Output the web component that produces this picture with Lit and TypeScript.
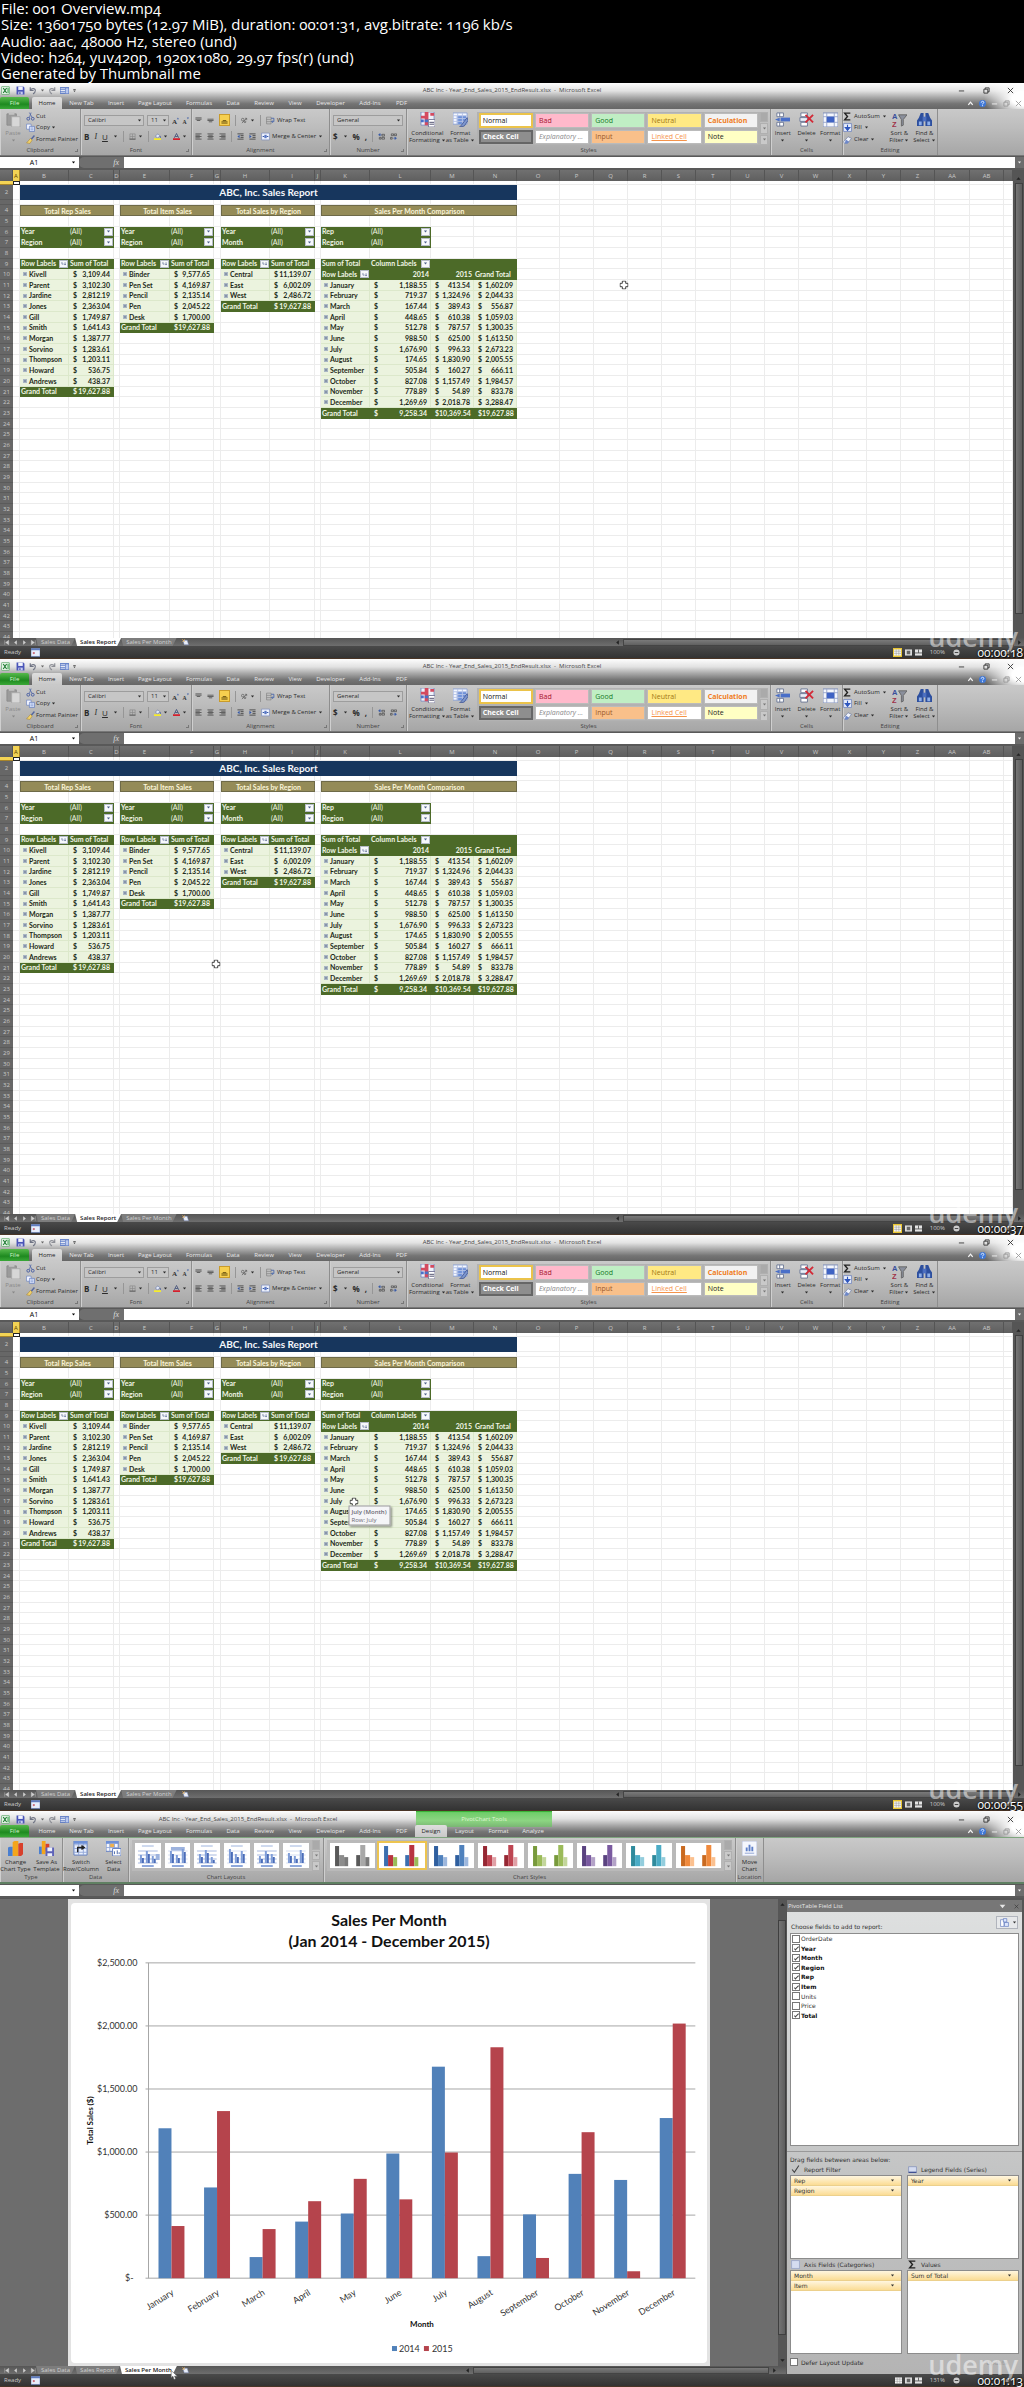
import { LitElement, html, svg, css, nothing, type TemplateResult } from "lit";
import { customElement, property } from "lit/decorators.js";
import { classMap } from "lit/directives/class-map.js";

/* ---------- data ---------- */

const INFO = [
  "File: 001 Overview.mp4",
  "Size: 13601750 bytes (12.97 MiB), duration: 00:01:31, avg.bitrate: 1196 kb/s",
  "Audio: aac, 48000 Hz, stereo (und)",
  "Video: h264, yuv420p, 1920x1080, 29.97 fps(r) (und)",
  "Generated by Thumbnail me",
];

const REPS: [string, string][] = [
  ["Kivell", "3,109.44"], ["Parent", "3,102.30"], ["Jardine", "2,812.19"], ["Jones", "2,363.04"],
  ["Gill", "1,749.87"], ["Smith", "1,641.43"], ["Morgan", "1,387.77"], ["Sorvino", "1,283.61"],
  ["Thompson", "1,203.11"], ["Howard", "536.75"], ["Andrews", "438.37"],
];
const ITEMS: [string, string][] = [
  ["Binder", "9,577.65"], ["Pen Set", "4,169.87"], ["Pencil", "2,135.14"], ["Pen", "2,045.22"], ["Desk", "1,700.00"],
];
const REGIONS: [string, string][] = [["Central", "11,139.07"], ["East", "6,002.09"], ["West", "2,486.72"]];
const MONTHS: [string, string, string, string][] = [
  ["January", "1,188.55", "413.54", "1,602.09"],
  ["February", "719.37", "1,324.96", "2,044.33"],
  ["March", "167.44", "389.43", "556.87"],
  ["April", "448.65", "610.38", "1,059.03"],
  ["May", "512.78", "787.57", "1,300.35"],
  ["June", "988.50", "625.00", "1,613.50"],
  ["July", "1,676.90", "996.33", "2,673.23"],
  ["August", "174.65", "1,830.90", "2,005.55"],
  ["September", "505.84", "160.27", "666.11"],
  ["October", "827.08", "1,157.49", "1,984.57"],
  ["November", "778.89", "54.89", "833.78"],
  ["December", "1,269.69", "2,018.78", "3,288.47"],
];

const COLS = "A B C D E F G H I J K L M N O P Q R S T U V W X Y Z AA AB".split(" ");
const COL_WIDTHS = [7, 49, 45, 6, 50, 44, 7, 49, 45, 6, 49, 61, 43, 43, 43, 34, 34, 34, 34, 35, 34, 34, 34, 34, 34, 34, 35, 34, 9];

/* ---------- icons ---------- */

const ICONS: Record<string, TemplateResult> = {
  excel: svg`<rect x="1" y="1" width="14" height="14" rx="1" fill="#e9f5ea" stroke="#3f9a4c"/><path d="M4 3.500l6 9M10 3.500l-6 9" stroke="#1f7a33" stroke-width="2"/><path d="M11 3h4v10h-4z" fill="#7cc287"/>`,
  save: svg`<path d="M1 1h12l2 2v12H1z" fill="#4a55b8"/><path d="M4 1h8v6H4z" fill="#f2f4fd"/><path d="M4 10h8v5H4z" fill="#c7cdf0"/><path d="M6 11h2v3H6z" fill="#39429a"/>`,
  undo: svg`<path d="M4 2v6h6M4 8c1-4 9-5 9 0 0 3-2 5-4 6" fill="none" stroke="#6f7484" stroke-width="2"/>`,
  redo: svg`<path d="M12 2v6H6M12 8c-1-4-9-5-9 0 0 3 2 5 4 6" fill="none" stroke="#8d8f96" stroke-width="2"/>`,
  table: svg`<path d="M0 2h16v12H0z" fill="#5877c4"/><path d="M1 5h8M1 8h8M1 11h8" stroke="#fff" stroke-width="1.500"/><path d="M10 4h5v9h-5z" fill="#b9c8ee"/>`,
  more: svg`<path d="M4 4h8v2H4zM4 8h8l-4 5z" fill="#444"/>`,
  down: svg`<path d="M3 5h10l-5 6z" fill="currentColor"/>`,
  paste: svg`<path d="M1 2h10v12H1z" fill="#9b9b9b" stroke="#8c8c8c"/><path d="M3 0h6v3H3z" fill="#c2c2c2"/><path d="M6 5h9v11H6z" fill="#d7d7d7" stroke="#aaa"/>`,
  cut: svg`<path d="M9 1L6 10M6 1l5 9" stroke="#566ca8" stroke-width="1.500" fill="none"/><circle cx="4" cy="12" r="2.500" fill="none" stroke="#3f55a0" stroke-width="1.500"/><circle cx="12" cy="12" r="2.500" fill="none" stroke="#3f55a0" stroke-width="1.500"/>`,
  copy: svg`<path d="M1 2h8v9H1z" fill="#f3f6ff" stroke="#5a76bd"/><path d="M6 6h9v9H6z" fill="#dbe5fb" stroke="#4b68b5"/><path d="M8 9h5M8 12h5" stroke="#5a76bd"/>`,
  brush: svg`<path d="M15 1l-6 7" stroke="#5568a0" stroke-width="2.500"/><path d="M8 6l3 3-4 6-6-1z" fill="#f3d36b" stroke="#a98532"/>`,
  grow: svg`<text x="0" y="15" font-family="Liberation Serif,serif" font-weight="bold" font-size="16" fill="#333">A</text><path d="M11 5l2.500-4L16 5z" fill="#4463a8"/>`,
  shrink: svg`<text x="1" y="15" font-family="Liberation Serif,serif" font-weight="bold" font-size="13" fill="#333">A</text><path d="M11 1l2.500 4L16 1z" fill="#4463a8"/>`,
  borders: svg`<path d="M2 2h12v12H2zM8 2v12M2 8h12" fill="none" stroke="#8a8a8a" stroke-width="1.500"/><path d="M1 14h14" stroke="#555" stroke-width="2"/>`,
  fill: svg`<path d="M3 7l6-5 5 5-6 4z" fill="#dfe7f8" stroke="#4b5f9a"/><path d="M14 7l1 4" stroke="#4b5f9a" stroke-width="2"/><path d="M0 12h16v4H0z" fill="#f6ec2c"/>`,
  color: svg`<path d="M3 11L8 1l5 10M5 8h6" fill="none" stroke="#46537c" stroke-width="2"/><path d="M0 12h16v4H0z" fill="#d51f2c"/>`,
  vtop: svg`<path d="M1 2h14M1 5h14M4 8h8" stroke="#555" stroke-width="2"/>`,
  vmid: svg`<path d="M1 5h14M1 8h14M4 11h8" stroke="#555" stroke-width="2"/>`,
  vbot: svg`<path d="M4 8h8M1 11h14M1 14h14" stroke="#6b5310" stroke-width="2"/>`,
  left: svg`<path d="M1 2h14M1 5h10M1 8h14M1 11h10M1 14h14" stroke="#555" stroke-width="2"/>`,
  center: svg`<path d="M1 2h14M3 5h10M1 8h14M3 11h10M1 14h14" stroke="#555" stroke-width="2"/>`,
  right: svg`<path d="M1 2h14M5 5h10M1 8h14M5 11h10M1 14h14" stroke="#555" stroke-width="2"/>`,
  orient: svg`<path d="M2 14L13 3M9 3h4v4" fill="none" stroke="#555" stroke-width="1.500"/><circle cx="4" cy="6" r="3" fill="none" stroke="#555" stroke-width="1.500"/><circle cx="9" cy="11" r="2" fill="none" stroke="#555" stroke-width="1.500"/>`,
  indentL: svg`<path d="M1 2h14M8 6h7M8 10h7M1 14h14" stroke="#444" stroke-width="2"/><path d="M6 4v8L1 8z" fill="#3458a8"/>`,
  indentR: svg`<path d="M1 2h14M8 6h7M8 10h7M1 14h14" stroke="#444" stroke-width="2"/><path d="M1 4v8l5-4z" fill="#3458a8"/>`,
  wrap: svg`<path d="M1 2h8v12H1zM1 6h8M1 10h8" fill="none" stroke="#777"/><path d="M9 4h5v6h-4M12 8l-2 2 2 2" fill="none" stroke="#4463a8" stroke-width="1.500"/>`,
  merge: svg`<path d="M1 2h14v12H1z" fill="#eef2fc" stroke="#6a7fb8"/><path d="M3 8h3M13 8h-3" stroke="#3458a8" stroke-width="2"/><path d="M6 5h4v6H6z" fill="#5877c4"/>`,
  incdec: svg`<path d="M1 4l4-3v6zM5 4h4" stroke="#3458a8" fill="#3458a8"/><path d="M9 3h6v4H9zM3 10h4v4H3zM9 10h6v4H9z" fill="none" stroke="#444" stroke-width="1.500"/>`,
  decdec: svg`<path d="M15 12l-4-3v6zM11 12H7" stroke="#3458a8" fill="#3458a8"/><path d="M3 2h5v4H3zM10 2h5v4h-5zM1 10h4v4H1z" fill="none" stroke="#444" stroke-width="1.500"/>`,
  cond: svg`<path d="M1 0h14v14H1z" fill="#eef1fa" stroke="#8090c0"/><path d="M5 0h4v14H5zM1 4h5v3H1zM11 1h4v3h-4z" fill="#d44a5f"/><path d="M5 8h4v3H5zM1 8h3v3H1z" fill="#4a6fc8"/><path d="M9 8h7v8H9z" fill="#fff" stroke="#7a7a9a"/><path d="M10 11h5M10 13h5" stroke="#4a4a6a"/>`,
  astable: svg`<path d="M0 1h15v12H0z" fill="#f5f8ff" stroke="#8ea2d4"/><path d="M4 4h10v9H4z" fill="#6d90d8"/><path d="M0 4h15M0 7h15M0 10h15M5 1v12M10 1v12" stroke="#b5c3e6"/><path d="M15 6l-6 8-2 2 5-1 4-6z" fill="#7d97cf" stroke="#4b5f9a"/>`,
  insert: svg`<path d="M2 1h7v4H2zM2 11h7v4H2z" fill="#fff" stroke="#6c7896"/><path d="M5 1v4M5 11v4" stroke="#6c7896"/><path d="M6 6h10v4H6z" fill="#4a6fc8"/><path d="M5 6v4L0 8z" fill="#4a6fc8"/>`,
  delete: svg`<path d="M2 1h7v4H2zM2 11h7v4H2z" fill="#fff" stroke="#6c7896"/><path d="M1 6h8v4H1z" fill="#e9edf8" stroke="#6c7896"/><path d="M7 3l8 8M15 3l-8 8" stroke="#d22b38" stroke-width="2"/>`,
  format: svg`<path d="M0 1h16v15H0z" fill="#f4f6fc" stroke="#7d8cb8"/><path d="M0 5h16M0 11h16M4 1v15M12 1v15" stroke="#9aa7cb"/><path d="M4 5h8v6H4z" fill="#3f63c4"/>`,
  sum: svg`<path d="M13 2H3l5 6-5 6h10" fill="none" stroke="#222" stroke-width="2.500"/>`,
  filldown: svg`<path d="M1 1h14v14H1z" fill="#e7edfb" stroke="#4b68b5"/><path d="M8 3v6M4 8l4 5 4-5z" fill="#2d55bd" stroke="#2d55bd" stroke-width="2"/>`,
  eraser: svg`<path d="M1 12l8-9 6 3-7 9H3z" fill="#f0f3fb" stroke="#5f6f9c"/><path d="M5 8l6 4-3 3H3z" fill="#6d87c8"/>`,
  sort: svg`<text x="0" y="7" font-family="Liberation Sans,sans-serif" font-weight="bold" font-size="8" fill="#3a4f9b">A</text><text x="0" y="16" font-family="Liberation Sans,sans-serif" font-weight="bold" font-size="8" fill="#a03048">Z</text><path d="M7 3h9l-4 5v6l-2 1V8z" fill="#8a8f9c" stroke="#666"/>`,
  find: svg`<path d="M2 6l2-5h3v14H0V9zM14 6l-2-5H9v14h7V9z" fill="#2d4f9e"/><path d="M6 5h4v5H6z" fill="#4c6fc0"/><path d="M2 10h3v4H2zM11 10h3v4h-3z" fill="#8fb0ea"/>`,
  chartType: svg`<path d="M0 7l2-1h3v10H0z" fill="#4a7fd0"/><path d="M5 1l2-1h4v16H5z" fill="#f4a51c"/><path d="M11 3l2-1h3v12l-2 2h-3z" fill="#d8402c"/>`,
  chartSave: svg`<path d="M0 6h3v8H0z" fill="#4a7fd0"/><path d="M3 0h4v14H3z" fill="#f4a51c"/><path d="M7 3h4v8H7z" fill="#d8402c"/><path d="M7 7h9v9H7z" fill="#5d62b8"/><path d="M9 7h5v4H9zM9 13h5v3H9z" fill="#edf0fb"/>`,
  switch: svg`<path d="M1 0h14v15H1z" fill="#eaf0fc" stroke="#5f7cc0"/><path d="M1 4h14M1 8h14M1 12h14M6 0v15M11 0v15" stroke="#93a9da"/><path d="M1 0h14v3H1z" fill="#6d90d8"/><path d="M5 12V7h6M9 5l3 2-3 2" fill="none" stroke="#222" stroke-width="1.500"/>`,
  selectData: svg`<path d="M0 0h13v11H0z" fill="#f6f8fe" stroke="#5f7cc0"/><path d="M0 0h13v3H0z" fill="#6d90d8"/><path d="M4 3h5v4H4z" fill="#f0b04a"/><path d="M0 7h13M4 3v8M9 3v8" stroke="#93a9da"/><path d="M7 8h9v8H7z" fill="#fff" stroke="#5f7cc0"/><path d="M9 14v-3M12 14v-4M14 14v-2" stroke="#4463a8"/>`,
  moveChart: svg`<path d="M0 0h16v16H0z" fill="#f5f7fd" stroke="#b4bdd6"/><path d="M4 11V7h2v4zM7 11V4h2v7zM10 11V6h2v5z" fill="#5f80c8"/><path d="M3 13h10" stroke="#8ea2d4"/>`,
  help: svg`<circle cx="8" cy="8" r="8" fill="#3f78d8"/><path d="M5 6c0-4 6-4 6-.500 0 2-3 2-3 4.500M8 12v2" fill="none" stroke="#fff" stroke-width="2"/>`,
  min: svg`<path d="M2 9h12" stroke="currentColor" stroke-width="2"/>`,
  restore: svg`<path d="M2 5h9v9H2zM5 5V2h9v9h-3" fill="none" stroke="currentColor" stroke-width="2"/>`,
  close: svg`<path d="M2 2l12 12M14 2L2 14" stroke="currentColor" stroke-width="2"/>`,
  up: svg`<path d="M3 11l5-6 5 6" fill="none" stroke="currentColor" stroke-width="3"/>`,
  upFill: svg`<path d="M3 11h10L8 5z" fill="currentColor"/>`,
  leftFill: svg`<path d="M11 3v10L5 8z" fill="currentColor"/>`,
  rightFill: svg`<path d="M5 3v10l6-5z" fill="currentColor"/>`,
  first: svg`<path d="M4 3v10M13 3v10L6 8z" fill="currentColor" stroke="currentColor"/>`,
  last: svg`<path d="M12 3v10M3 3v10l7-5z" fill="currentColor" stroke="currentColor"/>`,
  newSheet: svg`<path d="M2 3h10l3 10H5z" fill="#e8edf8" stroke="#6d7fb0"/><path d="M1 1l5 5M6 1L1 6" stroke="#f0b04a" stroke-width="2"/>`,
  record: svg`<path d="M0 1h16v14H0z" fill="#e8eefb" stroke="#5f7cc0"/><path d="M0 1h16v3H0z" fill="#5f7cc0"/><circle cx="5" cy="9" r="2" fill="#c86878"/>`,
  vNormal: svg`<path d="M0 1h16v14H0z" fill="#f4f4f4"/><path d="M0 5h16M0 10h16M5 1v14M11 1v14" stroke="#888"/>`,
  vLayout: svg`<path d="M0 1h16v14H0z" fill="#ddd"/><path d="M4 4h8v8H4z" fill="#666"/>`,
  vBreak: svg`<path d="M0 1h16v14H0z" fill="#e4e4e4"/><path d="M8 1v8M0 9h16" stroke="#555" stroke-width="2"/>`,
  zoomOut: svg`<circle cx="8" cy="8" r="7" fill="#ccc"/><path d="M4 8h8" stroke="#333" stroke-width="2"/>`,
  funnel: svg`<path d="M2 8l4 5L14 1" fill="none" stroke="#444" stroke-width="2"/>`,
  legend: svg`<path d="M1 3h14v10H1z" fill="#d5dcf0" stroke="#6d7fb0"/><path d="M1 13h14" stroke="#33448a" stroke-width="2"/>`,
  axis: svg`<path d="M1 1h14v14H1z" fill="#d5dcf0" stroke="#8595c4"/>`,
  panes: svg`<path d="M1 3h6v12H1z" fill="#fff" stroke="#4b68b5"/><path d="M6 1h6v6H6zM8 8h7v7H8z" fill="#dbe5fb" stroke="#4b68b5"/>`,
  sortBtn: svg`<path d="M3 3v7M3 10h5M13 4v7M10 9l3 4 3-4" fill="none" stroke="#4b5f8a" stroke-width="2"/>`,
  cross: svg`<path d="M5 1h6v4h4v6h-4v4H5v-4H1V5h4z" fill="#fff" stroke="#222" stroke-width="1.500"/>`,
  arrow: svg`<path d="M3 0v13l3-3 2 6 3-1-2-5h5z" fill="#fff" stroke="#555"/>`,
};

const icon = (name: string, size = "s") =>
  html`<svg class="ic ${size}" viewBox="0 0 16 16" aria-hidden="true">${ICONS[name]}</svg>`;

const shared = css`
  *, *::before, *::after { box-sizing: border-box; }
  button, input, select { font: inherit; color: inherit; margin: 0; padding: 0; border: 0; background: none; }
  .ic { display: block; flex: none; }
  .xs { width: 5px; height: 5px; }
  .s { width: 7px; height: 7px; }
  .m { width: 9px; height: 9px; }
  .l { width: 15px; height: 15px; }
`;

/* ---------- title bar and ribbon ---------- */

@customElement("excel-ribbon")
class ExcelRibbon extends LitElement {
  @property() mode = "home";

  static styles = [shared, css`
    :host { display: block; color: #2b2b2b; font: 6px/7px "Open Sans", "Noto Sans", sans-serif; }
    .chrome {
      background:
        radial-gradient(ellipse 40px 24px at 100% 60%, #fff 30%, transparent),
        linear-gradient(#fdfdfd, #e2e2e2 30%, #a9a9a9 55%, #747474 80%, #666);
    }
    .title { display: grid; grid-template-columns: 80px 1fr 80px; height: 14px; align-items: center; }
    .chart .title { grid-template-columns: 80px 336px 136px 1fr 80px; }
    .quick { display: flex; align-items: center; gap: 3px; padding-left: 1px; color: #666; }
    .name { text-align: center; color: #444; white-space: nowrap; }
    .context { align-self: stretch; text-align: center; color: #dff5d4; line-height: 16px; background: linear-gradient(#1fa51f, #6fce6a 10%, #8cd582 60%, #79b673); }
    .win { display: flex; justify-content: space-between; padding: 0 10px 0 14px; color: #333; }
    .tabs { display: grid; grid-template-columns: 29px 3px 30px 39px 30px 48px 40px 28px 34px 28px 43px 36px 27px 32px 35px 33px 36px 1fr auto; height: 12px; align-items: stretch; color: #e9e9e9; }
    .tabs button { white-space: nowrap; text-align: center; padding-top: 1px; }
    .tabs .file { grid-column: 1; color: #d8f5d0; background: linear-gradient(#57b94c, #1e8a20 60%, #3aa838); border-radius: 2px 2px 0 0; }
    .tabs .first { grid-column: 3; }
    .tabs .on { color: #222; background: linear-gradient(#dedede, #c8c8c8); border-radius: 2px 2px 0 0; }
    .doc { grid-column: -2; display: flex; align-items: center; gap: 5px; padding-right: 2px; color: #f5f5f5; }
    .doc .dim { color: #999; }
    .ribbon { display: flex; height: 47px; background: linear-gradient(#c9c9c9, #bdbdbd 40%, #a6a6a6); border-bottom: 1px solid #777; }
    .chart .ribbon { border-top: 1px solid #7fa57f; border-bottom: 2px solid #5f8062; }
    .group { position: relative; display: flex; flex-direction: column; border-right: 1px solid #8e8e8e; box-shadow: inset 1px 0 #cfcfcf; white-space: nowrap; }
    .body { flex: 1; display: flex; min-height: 0; }
    .label { text-align: center; height: 9px; line-height: 8px; color: #444; }
    .corner::after { content: ""; position: absolute; right: 2px; bottom: 3px; width: 3px; height: 3px; border: solid #777; border-width: 0 1px 1px 0; }
    .g-clip { width: 81px; } .g-font { width: 111px; } .g-align { width: 138px; } .g-num { width: 77px; }
    .g-styles { width: 364px; } .g-cells { width: 72px; } .g-edit { width: 95px; }
    .g-type { width: 63px; } .g-data { width: 66px; } .g-layouts { width: 195px; } .g-cstyles { width: 412px; } .g-loc { width: 28px; }
    .big { display: flex; flex-direction: column; align-items: center; padding-top: 3px; flex: 1; gap: 0; text-align: center; }
    .big .lines { padding-top: 3px; }
    .big .lines span { display: flex; justify-content: center; align-items: center; height: 7px; gap: 1px; }
    .off { color: #888; }
    .stack { display: flex; flex-direction: column; justify-content: space-around; padding: 2px 0 1px; }
    .stack button, .text { display: flex; align-items: center; gap: 2px; }
    .clip { flex: 0 0 26px; }
    .g-clip .stack button { gap: 1px; }
    .rows { display: flex; flex-direction: column; gap: 4px; padding: 5px 4px 0 3px; flex: 1; }
    .line { display: flex; align-items: center; height: 12px; gap: 5px; }
    .line.tight { gap: 3px; }
    .sep { width: 1px; height: 11px; background: #969696; }
    .pick { appearance: none; height: 11px; border: 1px solid #9d9d9d; padding-left: 3px; background: #c6c6c6; border-radius: 0; }
    .combo { display: grid; align-items: center; }
    .combo > * { grid-area: 1 / 1; }
    .combo .ic { justify-self: end; pointer-events: none; margin-right: 2px; }
    .w60 { width: 60px; } .w22 { width: 22px; } .w70 { width: 70px; }
    .lit { display: grid; place-items: center; width: 11px; height: 12px; background: #f6cf4f; border: 1px solid #c99b2a; }
    .i { font-style: italic; font-family: "Liberation Serif", serif; } .u { text-decoration: underline; }
    .b { font-weight: 700; }
    .line .b, .line .i, .line .u { font-size: 8px; }
    .twin { display: flex; flex: 0 0 66px; padding-left: 2px; }
    .gallery { display: flex; margin: 3px 2px 1px 2px; }
    .styles { display: grid; grid-template-columns: repeat(5, 1fr); gap: 2px; flex: 1; background: #b2b2b2; padding: 1px 2px; }
    .styles button { text-align: left; padding-left: 3px; font-size: 7px; line-height: 9px; border: 1px solid #bbb; background: #fff; white-space: nowrap; }
    .styles .normal { border: 2px solid #ebc34a; padding-left: 2px; color: #111; }
    .styles .bad { background: #ffb9cb; color: #a5122c; }
    .styles .good { background: #c0eec4; color: #177a28; }
    .styles .neutral { background: #ffe984; color: #a17611; }
    .styles .calc { background: #f2f2f2; color: #f07d22; font-weight: 700; }
    .styles .check { background: #8e8e8e; color: #fff; font-weight: 700; border: 2px solid #666; padding-left: 2px; }
    .styles .expl { color: #8a8a8a; font-style: italic; }
    .styles .input { background: #f9c08a; color: #9a5a2a; }
    .styles .linked { color: #f5934a; text-decoration: underline; }
    .styles .note { background: #ffffc4; color: #222; }
    .scroll { display: grid; grid-template-rows: repeat(3, 1fr); width: 8px; gap: 1px; color: #777; }
    .scroll button { display: grid; place-items: center; background: #c9c9c9; border: 1px solid #b0b0b0; }
    .scroll button:first-child { background: #aaa; }
    .thumbs { display: grid; grid-auto-flow: column; grid-auto-columns: 1fr; gap: 4px; flex: 1; padding: 3px; background: #b9b9b9; }
    .gallery.charts { margin: 2px 3px 2px 3px; }
    .thumbs button { display: flex; background: #fff; }
    .thumbs svg { width: 100%; height: 100%; display: block; }
    .thumbs .on { outline: 2px solid #ecc450; }
  `];

  private big(ic: string, a: string, b = "", arrow = false, cls = "") {
    return html`<button class="big ${cls}">${icon(ic, "l")}<div class="lines"><span>${a}</span><span>${b}${arrow ? icon("down", "xs") : nothing}</span></div></button>`;
  }

  private small(ic: string, label: string, arrow = false) {
    return html`<button>${icon(ic, "m")}${label}${arrow ? icon("down", "xs") : nothing}</button>`;
  }

  private ib(ic: string, label: string, arrow = false) {
    return html`<button class="text" aria-label=${label}>${icon(ic, "s")}${arrow ? icon("down", "xs") : nothing}</button>`;
  }

  private scroller() {
    return html`<div class="scroll"><button aria-label="Previous row"></button><button aria-label="Next row">${icon("down", "xs")}</button><button aria-label="More">${icon("down", "xs")}</button></div>`;
  }

  private home() {
    const styles = [
      ["normal", "Normal"], ["bad", "Bad"], ["good", "Good"], ["neutral", "Neutral"], ["calc", "Calculation"],
      ["check", "Check Cell"], ["expl", "Explanatory ..."], ["input", "Input"], ["linked", "Linked Cell"], ["note", "Note"],
    ];
    return html`
      <div class="group corner g-clip"><div class="body">
        <button class="big off clip">${icon("paste", "l")}<div class="lines"><span>Paste</span><span>${icon("down", "xs")}</span></div></button>
        <div class="stack">${this.small("cut", "Cut")}${this.small("copy", "Copy", true)}${this.small("brush", "Format Painter")}</div>
      </div><div class="label">Clipboard</div></div>

      <div class="group corner g-font"><div class="body"><div class="rows">
        <div class="line tight">
          <div class="combo"><select class="pick w60" aria-label="Font"><option>Calibri</option></select>${icon("down", "xs")}</div>
          <div class="combo"><select class="pick w22" aria-label="Font size"><option>11</option></select>${icon("down", "xs")}</div>
          ${this.ib("grow", "Increase font size")}${this.ib("shrink", "Decrease font size")}
        </div>
        <div class="line"><button class="b">B</button><button class="i">I</button><button class="u">U</button>${icon("down", "xs")}<i class="sep"></i>
          ${this.ib("borders", "Borders", true)}<i class="sep"></i>${this.ib("fill", "Fill colour", true)}${this.ib("color", "Font colour", true)}</div>
      </div></div><div class="label">Font</div></div>

      <div class="group corner g-align"><div class="body"><div class="rows">
        <div class="line">${this.ib("vtop", "Top")}${this.ib("vmid", "Middle")}<button class="lit" aria-label="Bottom">${icon("vbot")}</button><i class="sep"></i>${this.ib("orient", "Orientation", true)}<i class="sep"></i><button class="text">${icon("wrap", "m")}Wrap Text</button></div>
        <div class="line">${this.ib("left", "Left")}${this.ib("center", "Centre")}${this.ib("right", "Right")}<i class="sep"></i>${this.ib("indentL", "Decrease indent")}${this.ib("indentR", "Increase indent")}<button class="text">${icon("merge", "m")}Merge &amp; Center${icon("down", "xs")}</button></div>
      </div></div><div class="label">Alignment</div></div>

      <div class="group corner g-num"><div class="body"><div class="rows">
        <div class="line"><div class="combo"><select class="pick w70" aria-label="Number format"><option>General</option></select>${icon("down", "xs")}</div></div>
        <div class="line"><button class="b">$</button>${icon("down", "xs")}<button class="b">%</button><button class="b">,</button><i class="sep"></i>${this.ib("incdec", "Increase decimal")}${this.ib("decdec", "Decrease decimal")}</div>
      </div></div><div class="label">Number</div></div>

      <div class="group g-styles"><div class="body">
        <div class="twin">${this.big("cond", "Conditional", "Formatting", true)}${this.big("astable", "Format", "as Table", true)}</div>
        <div class="gallery body"><div class="styles">${styles.map(([c, t]) => html`<button class=${c}>${t}</button>`)}</div>${this.scroller()}</div>
      </div><div class="label">Styles</div></div>

      <div class="group g-cells"><div class="body">${this.big("insert", "Insert", "", true)}${this.big("delete", "Delete", "", true)}${this.big("format", "Format", "", true)}</div><div class="label">Cells</div></div>

      <div class="group g-edit"><div class="body">
        <div class="stack">${this.small("sum", "AutoSum", true)}${this.small("filldown", "Fill", true)}${this.small("eraser", "Clear", true)}</div>
        ${this.big("sort", "Sort &", "Filter", true)}${this.big("find", "Find &", "Select", true)}
      </div><div class="label">Editing</div></div>`;
  }

  private layoutThumb(i: number) {
    const bars = [[8, 12, 7], [12, 8, 14], [9, 13, 6], [14, 9, 12], [7, 12, 9], [10, 7, 13]][i];
    return html`<svg viewBox="0 0 26 25" preserveAspectRatio="none" aria-hidden="true">
      ${i === 1 ? svg`<path d="M6 4h14v4H6z" fill="#9db3de"/>` : svg`<path d="M7 3h12" stroke="#9db3de"/>`}
      <path d="M3 20h20M3 16h20M3 12h20M3 8h20" stroke=${i % 2 ? "#d5def2" : "#a8b9e0"}/>
      ${bars.map((h, k) => svg`<rect x=${5 + k * 6} y=${20 - h} width="2" height=${h} fill="#7f9dd8"/><rect x=${7 + k * 6} y=${23 - h} width="2" height=${h - 3} fill="#4a6cb8"/>`)}
      ${i === 0 ? svg`<path d="M21 11h4v6h-4z" fill="#9db3de"/>` : nothing}
      <path d="M7 23h12" stroke="#8ea8dc" stroke-width="2"/></svg>`;
  }

  private design() {
    const styles = [
      ["#595959", "#8c8c8c", "#7a7a7a", "#a8a8a8"], ["#3c6faf", "#b83440", "#9bbb59", ""], ["#2f5f9f", "#4f81bd", "#9db7dd", ""],
      ["#962733", "#be4552", "#e0a0a6", ""], ["#789a3c", "#9bbb59", "#c3d69b", ""], ["#5a4380", "#7a5aa0", "#b3a2c7", ""],
      ["#2f8a9c", "#4bacc6", "#93cddd", ""], ["#c96a20", "#f08a3c", "#fbc08f", ""],
    ];
    return html`
      <div class="group g-type"><div class="body">${this.big("chartType", "Change", "Chart Type")}${this.big("chartSave", "Save As", "Template")}</div><div class="label">Type</div></div>
      <div class="group g-data"><div class="body">${this.big("switch", "Switch", "Row/Column")}${this.big("selectData", "Select", "Data")}</div><div class="label">Data</div></div>
      <div class="group g-layouts"><div class="body gallery charts"><div class="thumbs">${[0, 1, 2, 3, 4, 5].map((i) => html`<button aria-label="Layout ${i + 1}">${this.layoutThumb(i)}</button>`)}</div>${this.scroller()}</div><div class="label">Chart Layouts</div></div>
      <div class="group g-cstyles"><div class="body gallery charts"><div class="thumbs">${styles.map(([a, b, c, d], i) => html`
        <button class=${classMap({ on: i === 1 })} aria-label="Style ${i + 1}"><svg viewBox="0 0 45 25" aria-hidden="true">
          <rect x="5" y="3" width="4" height="20" fill=${a}/><rect x="9" y="12" width="5" height="11" fill=${b}/><rect x="14" y="14" width="4" height="9" fill=${c}/>
          <rect x="26" y="12" width="4" height="11" fill=${a}/><rect x="30" y="2" width="5" height="21" fill=${d || b}/><rect x="35" y="14" width="4" height="9" fill=${c}/></svg></button>`)}</div>${this.scroller()}</div><div class="label">Chart Styles</div></div>
      <div class="group g-loc"><div class="body">${this.big("moveChart", "Move", "Chart")}</div><div class="label">Location</div></div>`;
  }

  render() {
    const chart = this.mode === "chart";
    const tabs = ["Home", "New Tab", "Insert", "Page Layout", "Formulas", "Data", "Review", "View", "Developer", "Add-Ins", "PDF",
      ...(chart ? ["Design", "Layout", "Format", "Analyze"] : [])];
    const active = chart ? "Design" : "Home";
    return html`<div class=${classMap({ chart })}>
      <header class="chrome">
        <div class="title">
          <div class="quick">${icon("excel", "m")}<span></span>${icon("save", "m")}${icon("undo", "m")}${icon("down", "xs")}${icon("redo", "m")}${icon("table", "m")}${icon("more", "xs")}</div>
          <div class="name">ABC Inc - Year_End_Sales_2015_EndResult.xlsx&nbsp; - &nbsp;Microsoft Excel</div>
          ${chart ? html`<div class="context">PivotChart Tools</div><span></span>` : nothing}
          <div class="win"><button aria-label="Minimize">${icon("min")}</button><button aria-label="Restore">${icon("restore")}</button><button aria-label="Close">${icon("close")}</button></div>
        </div>
        <nav class="tabs"><button class="file">File</button>
          ${tabs.map((t, i) => html`<button class=${classMap({ first: i === 0, on: t === active })}>${t}</button>`)}
          <div class="doc">${icon("up")}${icon("help")}${icon("min")}<span class="dim">${icon("restore")}</span><span class="dim">${icon("close")}</span></div>
        </nav>
      </header>
      <div class="ribbon">${chart ? this.design() : this.home()}</div>
    </div>`;
  }
}

/* ---------- formula bar, sheet tabs, status bar ---------- */

@customElement("formula-bar")
class FormulaBar extends LitElement {
  @property() ref = "";
  static styles = [shared, css`
    :host { display: flex; height: 14px; padding: 1px 0 2px; background: #595959; font: 7px/9px "Open Sans", sans-serif; }
    .ref { width: 79px; display: grid; align-items: center; background: #fff; }
    .ref > * { grid-area: 1 / 1; }
    .ref input { width: 68px; text-align: center; }
    .ref .ic { justify-self: end; margin-right: 3px; }
    .fx { width: 45px; border-radius: 5px 0 0 5px; background: #6f6f6f; color: #ddd; text-align: right; padding-right: 5px; font: italic 8px/10px "Liberation Serif", serif; }
    .value { flex: 1; min-width: 0; background: #fff; }
    .open { width: 9px; display: grid; place-items: center; color: #eee; background: #6d6d6d; }
  `];
  render() {
    return html`<div class="ref"><input aria-label="Name box" .value=${this.ref} />${icon("down", "xs")}</div><button class="fx" aria-label="Insert function">fx</button><input class="value" aria-label="Formula" /><button class="open" aria-label="Expand formula bar">${icon("down", "xs")}</button>`;
  }
}

@customElement("sheet-tabs")
class SheetTabs extends LitElement {
  @property() active = "";
  static styles = [shared, css`
    :host { display: flex; height: 8px; background: linear-gradient(#565656, #6e6e6e); color: #d0d0d0; font: 6px/8px "Open Sans", sans-serif; }
    .nav { display: flex; gap: 2px; width: 36px; padding: 1px 3px; }
    .tab { padding: 0 5px; white-space: nowrap; background: #7d7d7d; clip-path: polygon(0 0, 100% 0, calc(100% - 4px) 100%, 2px 100%); }
    .on { color: #222; background: #fff; font-weight: 600; }
    .new { padding-left: 5px; }
    .bar { margin-left: auto; flex: 0 0 40%; display: flex; align-items: center; gap: 2px; color: #222; padding-right: 1px; }
    :host([short]) .bar { flex-basis: 41%; padding-right: 8px; }
    .thumb { flex: 1; height: 7px; background: linear-gradient(#7a7a7a, #606060); border: 1px solid #444; }
  `];
  render() {
    return html`<div class="nav">${icon("first", "s")}${icon("leftFill", "s")}${icon("rightFill", "s")}${icon("last", "s")}</div>
      ${["Sales Data", "Sales Report", "Sales Per Month"].map((t) => html`<button class=${classMap({ tab: true, on: t === this.active })}>${t}</button>`)}
      <button class="new" aria-label="New sheet">${icon("newSheet", "s")}</button>
      <div class="bar">${icon("leftFill", "s")}<div class="thumb"></div>${icon("rightFill", "s")}</div>`;
  }
}

@customElement("status-bar")
class StatusBar extends LitElement {
  @property() zoom = "100%";
  @property({ type: Boolean }) lit = false;
  static styles = [shared, css`
    :host { display: flex; align-items: center; gap: 3px; height: 13px; padding: 0 64px 0 4px; background: linear-gradient(#4a4a4a, #333); border-bottom: 1px solid #4a3526; color: #c9c9c9; font: 6px/12px "Open Sans", sans-serif; }
    .rec { padding-left: 7px; margin-right: auto; }
    .view { display: grid; place-items: center; }
    .hot { background: #e9c532; padding: 1px; }
    .zoom { padding: 0 5px; }
  `];
  render() {
    return html`<span>Ready</span><span class="rec">${icon("record", "m")}</span>
      <button class="view ${this.lit ? "hot" : ""}" aria-label="Normal view">${icon("vNormal")}</button><button class="view" aria-label="Page layout view">${icon("vLayout")}</button><button class="view" aria-label="Page break view">${icon("vBreak")}</button>
      <span class="zoom">${this.zoom}</span>${icon("zoomOut")}`;
  }
}

/* ---------- worksheet ---------- */

interface Cell { body: unknown; cls: string; span?: number }

const money = (v: string) => html`<div class="money"><span>$</span><span>${v}</span></div>`;
const plus = (t: string) => html`<div class="item"><button class="plus" aria-label="Expand ${t}"></button>${t}</div>`;
const withButton = (t: string, ic: string, tight = false) =>
  html`<div class=${tight ? "drop tight" : "drop"}><span>${t}</span><button aria-label="${t} options">${icon(ic, "xs")}</button></div>`;

function buildCells(): Map<string, Cell> {
  const m = new Map<string, Cell>();
  const put = (r: number, c: number, body: unknown, cls: string, span?: number) => m.set(`${r}:${c}`, { body, cls, span });
  put(2, 1, "ABC, Inc. Sales Report", "banner", 13);
  put(4, 1, "Total Rep Sales", "tan", 2);
  put(4, 4, "Total Item Sales", "tan", 2);
  put(4, 7, "Total Sales by Region", "tan", 2);
  put(4, 10, "Sales Per Month Comparison", "tan", 4);
  const filters: [number, string, string][] = [[1, "Year", "Region"], [4, "Year", "Region"], [7, "Year", "Month"], [10, "Rep", "Region"]];
  for (const [c, a, b] of filters) {
    put(6, c, a, "green");
    put(6, c + 1, withButton("(All)", "down"), "green plain");
    put(7, c, b, "green");
    put(7, c + 1, withButton("(All)", "down"), "green plain");
  }
  const simple: [number, [string, string][]][] = [[1, REPS], [4, ITEMS], [7, REGIONS]];
  for (const [c, rows] of simple) {
    put(9, c, withButton("Row Labels", "sortBtn", true), "green");
    put(9, c + 1, "Sum of Total", "green");
    rows.forEach(([n, v], i) => {
      put(10 + i, c, plus(n), "pale");
      put(10 + i, c + 1, money(v), "pale");
    });
    put(10 + rows.length, c, "Grand Total", "green");
    put(10 + rows.length, c + 1, money("19,627.88"), "green");
  }
  put(9, 10, "Sum of Total", "green");
  put(9, 11, withButton("Column Labels", "down"), "green");
  put(9, 12, "", "green");
  put(9, 13, "", "green");
  put(10, 10, withButton("Row Labels", "sortBtn", true), "green");
  put(10, 11, "2014", "green end");
  put(10, 12, "2015", "green end");
  put(10, 13, "Grand Total", "green");
  MONTHS.forEach(([n, ...v], i) => {
    put(11 + i, 10, plus(n), "pale");
    v.forEach((x, k) => put(11 + i, 11 + k, money(x), "pale"));
  });
  put(23, 10, "Grand Total", "green");
  ["9,258.34", "10,369.54", "19,627.88"].forEach((x, k) => put(23, 11 + k, money(x), "green"));
  return m;
}

const CELLS = buildCells();

@customElement("work-sheet")
class WorkSheet extends LitElement {
  static styles = [shared, css`
    :host { display: flex; flex: 1; min-height: 0; overflow: hidden; background: #fff; font: 700 7px/9px Lato, "Open Sans", sans-serif; color: #1d2a18; }
    table { flex: 1; width: 100%; table-layout: fixed; border-spacing: 0; border-collapse: separate; align-self: flex-start; }
    .rowhead { width: 13px; }
    th, td { padding: 0; height: 11px; white-space: nowrap; overflow: visible; vertical-align: middle; }
    tr:nth-child(3n + 6) > * { height: 10px; }
    tr.r1 > * { height: 4px; line-height: 3px; }
    tr.r2 > * { height: 15px; }
    tr.r3 > * { height: 5px; line-height: 4px; }
    thead th { height: 11px; background: linear-gradient(#707070, #5f5f5f); color: #c9c9c9; border-right: 1px solid #555; font: 6px/10px "Open Sans", sans-serif; }
    tbody th { background: #676767; color: #c9c9c9; border-bottom: 1px solid #5b5b5b; font: 6px/8px "Open Sans", sans-serif; }
    thead .sel, .r1 th { background: #f3d354; color: #5a4300; border-color: #a8852a; }
    td { border: solid #ececec; border-width: 0 1px 1px 0; padding-left: 1px; }
    .r1 .cur { border: 1px solid #222; }
    td.banner { background: #17365d; color: #f4f7fb; text-align: center; font-size: 10px; line-height: 14px; border-color: #17365d; }
    td.tan { background: #948b58; color: #fbf5d8; text-align: center; border: 1px solid #6e6a48; line-height: 8px; }
    td.green { background: #4c6a28; color: #f1f6e6; border-color: #4c6a28; }
    td.plain { font-weight: 400; }
    td.pale { background: #ebf3de; border-color: #dce8cb; }
    td.end { text-align: right; padding-right: 1px; }
    .money { display: flex; justify-content: space-between; padding: 0 3px 0 3px; }
    .item { display: flex; align-items: center; gap: 2px; padding-left: 2px; }
    .plus { width: 4px; height: 4px; border: 1px solid #a9b6c4; background: #8794a8; flex: none; }
    .drop { display: flex; align-items: center; justify-content: space-between; }
    .drop button { width: 9px; height: 8px; background: #f7f9fc; border: 1px solid #b5bcc8; color: #4b5f8a; display: grid; place-items: center; flex: none; }
    .scroll { flex: 0 0 11px; display: flex; flex-direction: column; align-items: center; background: #555; color: #222; padding-top: 5px; }
    .thumb { width: 8px; height: 93%; background: linear-gradient(90deg, #767676, #5d5d5d); border: 1px solid #3f3f3f; margin: 1px; }
  `];

  private row(r: number) {
    const out: TemplateResult[] = [];
    for (let c = 0; c < COL_WIDTHS.length; c++) {
      const cell = CELLS.get(`${r}:${c}`);
      if (cell) {
        out.push(html`<td class=${cell.cls} colspan=${cell.span ?? 1}>${cell.body}</td>`);
        c += (cell.span ?? 1) - 1;
      } else out.push(html`<td class=${r === 1 && c === 0 ? "cur" : ""}></td>`);
    }
    return html`<tr class="r${r}"><th scope="row">${r === 1 || r === 3 ? nothing : r}</th>${out}</tr>`;
  }

  render() {
    return html`<table aria-label="Sales Report">
        <colgroup><col class="rowhead" />${COL_WIDTHS.map((w) => html`<col style="width:${w}px" />`)}</colgroup>
        <thead><tr><th></th>${COLS.map((c) => html`<th scope="col" class=${c === "A" ? "sel" : ""}>${c}</th>`)}<th></th></tr></thead>
        <tbody>${Array.from({ length: 44 }, (_, i) => this.row(i + 1))}</tbody>
      </table>
      <div class="scroll">${icon("upFill")}<div class="thumb"></div></div>`;
  }
}

/* ---------- chart sheet ---------- */

const num = (s: string) => Number(s.replace(",", ""));

@customElement("chart-sheet")
class ChartSheet extends LitElement {
  static styles = [shared, css`
    :host { display: flex; flex: 1; min-height: 0; background: #6d6d6d; }
    .space { flex: 1; display: flex; justify-content: center; min-width: 0; }
    .page { margin: 0 auto; border: 3px solid #e3e3e3; border-top-width: 4px; background: #e3e3e3; width: 642px; max-width: 100%; }
    svg.plot { display: block; width: 100%; height: 100%; background: #fff; border-radius: 4px; font-family: Lato, "Open Sans", sans-serif; }
    .title { font-size: 16px; font-weight: 700; text-anchor: middle; fill: #111; }
    .tick { font-size: 9px; text-anchor: end; fill: #333; }
    .axis { font-size: 8px; font-weight: 700; text-anchor: middle; fill: #111; }
    .key { font-size: 9px; fill: #333; }
    .grid { stroke: #a6a6a6; }
    .a { fill: #5181b9; } .b { fill: #b5444c; }
    .scroll { flex: 0 0 8px; display: flex; flex-direction: column; align-items: center; background: #565656; color: #222; padding: 2px 0; }
    .thumb { flex: 1; width: 8px; margin: 12px 0 22px; background: linear-gradient(90deg, #747474, #5d5d5d); border: 1px solid #3f3f3f; }
  `];

  render() {
    const x0 = 77, x1 = 625, y0 = 376, top = 60;
    const step = (x1 - x0) / 12;
    const y = (v: number) => y0 - (v / 2500) * (y0 - top);
    const ticks = ["$-", "$500.00", "$1,000.00", "$1,500.00", "$2,000.00", "$2,500.00"];
    return html`<div class="space"><div class="page">
      <svg class="plot" viewBox="0 0 636 461" role="img" aria-label="Sales Per Month">
        <text class="title" x="318" y="23">Sales Per Month</text>
        <text class="title" x="318" y="44">(Jan 2014 - December 2015)</text>
        ${ticks.map((t, i) => svg`<path class="grid" d="M${x0 - 3} ${y(i * 500)}H${x1}"/><text class="tick" x=${i ? 66 : 62} y=${y(i * 500) + 3}>${t}</text>`)}
        <path class="grid" d="M${x0} ${top}V${y0}"/>
        ${MONTHS.map(([n, a, b], i) => {
          const x = x0 + step * i + 10;
          return svg`<rect class="a" x=${x} y=${y(num(a))} width="13" height=${y0 - y(num(a))}/><rect class="b" x=${x + 13} y=${y(num(b))} width="13" height=${y0 - y(num(b))}/>
            <text class="tick" transform="translate(${x + 16} 392) rotate(-32)">${n}</text>`;
        })}
        <text class="axis" transform="translate(21 218) rotate(-90)">Total Sales ($)</text>
        <text class="axis" x="351" y="425">Month</text>
        <rect class="a" x="321" y="444" width="5" height="5"/><text class="key" x="328" y="450">2014</text>
        <rect class="b" x="353" y="444" width="5" height="5"/><text class="key" x="361" y="450">2015</text>
      </svg></div></div>
      <div class="scroll">${icon("upFill")}<div class="thumb"></div>${icon("down", "s")}</div>`;
  }
}

@customElement("field-list")
class FieldList extends LitElement {
  static styles = [shared, css`
    :host { display: flex; flex-direction: column; flex: 0 0 238px; background: linear-gradient(#dfe1e1, #c2c3c3 60%, #b4b4b4); border: solid #555; border-width: 2px 2px 0 1px; font: 6px/9px "DejaVu Sans", Verdana, sans-serif; color: #333; }
    .head { display: flex; align-items: center; gap: 7px; height: 12px; background: #777; color: #e6e6e6; padding: 0 3px 0 1px; font-family: "Open Sans", sans-serif; }
    .head span { flex: 1; }
    .head .x { color: #333; }
    .choose { display: flex; justify-content: space-between; align-items: flex-end; height: 21px; padding: 4px 4px 3px 4px; }
    .panes { display: flex; align-items: center; gap: 3px; width: 22px; height: 13px; padding: 0 3px; border: 1px solid #b0b4bc; background: #e6e8ea; margin-bottom: 1px; }
    .choose span { line-height: 7px; }
    .list { flex: 1; margin: 0 3px 0 3px; border: 1px solid #8c8c8c; background: #fff; padding: 0 1px; min-width: 0; }
    .fields { display: grid; grid-auto-rows: 1fr; height: 86px; }
    label { display: flex; align-items: center; gap: 1px; }
    input { appearance: none; width: 8px; height: 8px; border: 1px solid #777; background: #fff; display: grid; place-items: center; flex: none; }
    input:checked::after { content: ""; width: 5px; height: 2px; border: solid #444; border-width: 0 0 1px 1px; transform: rotate(-45deg); }
    .on { font-weight: 700; color: #111; }
    .drag { margin-top: 5px; border-top: 1px solid #999; padding: 3px 3px 0; }
    .areas { display: grid; grid-template-columns: 1fr 1fr; column-gap: 5px; padding: 0 3px; }
    .areas h4 { margin: 0; font: inherit; display: flex; align-items: center; gap: 4px; height: 11px; padding-left: 1px; }
    .box { height: 84px; border: 1px solid #8c8c8c; background: #fff; }
    .box button { display: flex; width: 100%; height: 10px; align-items: center; justify-content: space-between; padding: 0 6px 0 3px; background: linear-gradient(#fff6df, #fbdc94); border-bottom: 1px solid #ecd08c; }
    .foot { display: flex; justify-content: space-between; align-items: center; height: 20px; padding: 0 14px 4px 3px; }
    .foot button { color: #999; }
    .foot label { gap: 3px; }
  `];

  private area(ic: string, title: string, items: string[]) {
    return html`<section><h4>${icon(ic, "m")}${title}</h4><div class="box">${items.map((t) => html`<button>${t}${icon("down", "xs")}</button>`)}</div></section>`;
  }

  render() {
    const fields: [string, boolean][] = [["OrderDate", false], ["Year", true], ["Month", true], ["Region", true], ["Rep", true], ["Item", true], ["Units", false], ["Price", false], ["Total", true]];
    return html`<div class="head"><span>PivotTable Field List</span>${icon("down", "m")}<i class="x">${icon("close", "xs")}</i></div>
      <div class="choose"><span>Choose fields to add to report:</span><button class="panes" aria-label="Layout of panes">${icon("panes", "m")}${icon("down", "xs")}</button></div>
      <div class="list"><div class="fields">${fields.map(([f, on]) => html`<label class=${on ? "on" : ""}><input type="checkbox" .checked=${on} />${f}</label>`)}</div></div>
      <div class="drag">Drag fields between areas below:</div>
      <div class="areas">
        ${this.area("funnel", "Report Filter", ["Rep", "Region"])}${this.area("legend", "Legend Fields (Series)", ["Year"])}
        ${this.area("axis", "Axis Fields (Categories)", ["Month", "Item"])}${this.area("sum", "Values", ["Sum of Total"])}
      </div>
      <div class="foot"><label><input type="checkbox" />Defer Layout Update</label><button>Update</button></div>`;
  }
}

/* ---------- page ---------- */

interface Shot { time: string; kind: "sheet" | "chart"; x: number; y: number; tip?: boolean }

const SHOTS: Shot[] = [
  { time: "00:00:18", kind: "sheet", x: 624, y: 202 },
  { time: "00:00:37", kind: "sheet", x: 216, y: 305 },
  { time: "00:00:55", kind: "sheet", x: 354, y: 267, tip: true },
  { time: "00:01:13", kind: "chart", x: 174, y: 564 },
];

@customElement("app-root")
class AppRoot extends LitElement {
  static styles = [shared, css`
    :host { display: block; background: #000; }
    .info { display: flex; flex-direction: column; justify-content: space-between; height: 83px; margin: 0; padding: 0 1px 2px; color: #fff; font: 15px/16px "Open Sans", "Noto Sans", sans-serif; font-variant-numeric: oldstyle-nums; white-space: nowrap; }
    .info p { margin: 0; }
    .shot { position: relative; display: flex; flex-direction: column; aspect-ratio: 16 / 9; overflow: hidden; background: #6b6b6b; }
    .main { flex: 1; display: flex; min-height: 0; }
    .left { flex: 1; display: flex; flex-direction: column; min-width: 0; border-top: 1px solid #555; }
    .mark { position: absolute; right: 6px; bottom: 6px; font: 600 27px/32px "Open Sans", sans-serif; color: rgba(255, 255, 255, 0.5); pointer-events: none; }
    .time { position: absolute; right: 1px; bottom: 0; color: #fff; font: 12px/13px "Open Sans", sans-serif; font-variant-numeric: oldstyle-nums; text-shadow: 1px 1px 1px #000, 0 0 2px #000; }
    .pointer { position: absolute; width: 9px; height: 9px; transform: translate(-50%, -50%); }
    .tip { position: absolute; left: -1px; top: 8px; width: 42px; padding: 1px 1px 1px 2px; background: #f5f5f8; border: 1px solid #999; box-shadow: 1px 1px 2px rgba(0, 0, 0, 0.4); color: #6a6a74; font: 6px/8px "Open Sans", sans-serif; white-space: nowrap; }
    .tip b { display: block; font-weight: 600; }
  `];

  private shot(s: Shot) {
    const chart = s.kind === "chart";
    return html`<article class="shot">
      <excel-ribbon mode=${chart ? "chart" : "home"}></excel-ribbon>
      <formula-bar ref=${chart ? "" : "A1"}></formula-bar>
      ${chart
        ? html`<div class="main"><div class="left"><chart-sheet></chart-sheet><sheet-tabs short active="Sales Per Month"></sheet-tabs></div><field-list></field-list></div>`
        : html`<work-sheet></work-sheet><sheet-tabs active="Sales Report"></sheet-tabs>`}
      <status-bar zoom=${chart ? "131%" : "100%"} ?lit=${!chart}></status-bar>
      <div class="pointer" style="left:${(s.x / 1024) * 100}%;top:${(s.y / 576) * 100}%">
        ${icon(chart ? "arrow" : "cross", "m")}
        ${s.tip ? html`<div class="tip"><b>July (Month)</b>Row: July</div>` : nothing}
      </div>
      <div class="mark">udemy</div>
      <time class="time">${s.time}</time>
    </article>`;
  }

  render() {
    return html`<header class="info">${INFO.map((l) => html`<p>${l}</p>`)}</header>${SHOTS.map((s) => this.shot(s))}`;
  }
}
